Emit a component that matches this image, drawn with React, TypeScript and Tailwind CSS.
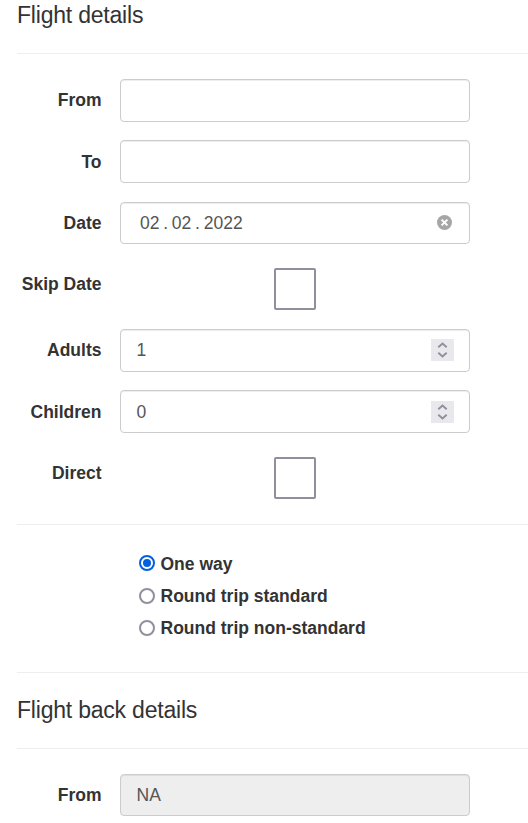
import React from "react";

const label = "w-[101.5px] shrink-0 text-right text-[17.5px] leading-[26px] font-bold";
const field =
  "ml-[18.5px] flex w-[350px] shrink-0 items-center rounded-[4px] border border-[#ccc] pl-[15.5px] text-[17.5px] text-[#555] shadow-[inset_0_1px_1px_rgba(0,0,0,0.075)]";
const box = "mt-[5px] ml-[172.5px] size-[42px] rounded-[2px] border-2 border-[#8f8f9d]";
const title = "text-[23px] leading-[30px] tracking-[-0.21px]";

function Spinner({ className }: { className: string }) {
  return (
    <span className={"mr-[15px] ml-auto flex h-[22px] w-[23px] items-center justify-center bg-[#e9e9ed] " + className}>
      <svg width="23" height="22" viewBox="0 0 23 22" fill="none" stroke="#8f8f9d" strokeWidth="1.9">
        <path d="M7.3 8.3l4.2-3.8 4.2 3.8M7.3 13.7l4.2 3.8 4.2-3.8" />
      </svg>
    </span>
  );
}

function Radio({ text, checked }: { text: string; checked?: boolean }) {
  return (
    <div className="flex h-8 items-center">
      <span
        className={
          checked
            ? "flex size-4 items-center justify-center rounded-full border-2 border-[#0060df]"
            : "size-4 rounded-full border-2 border-[#8f8f9d]"
        }
      >
        {checked && <span className="size-2 rounded-full bg-[#0060df]" />}
      </span>
      <span
        className={
          checked
            ? "ml-[5.5px] pt-px text-[17.5px] leading-[26px] font-bold"
            : "ml-[5.5px] pb-px text-[17.5px] leading-[26px] font-bold"
        }
      >
        {text}
      </span>
    </div>
  );
}

export default function App() {
  return (
    <div className="h-[823px] w-[528px] overflow-hidden bg-white pl-[17px] font-['Liberation_Sans',Arial,sans-serif] text-[#333]">
      <h2 className={title + " h-[53px]"}>Flight details</h2>
      <div className="-ml-[17px]">
        <div className="ml-[17px] border-t border-[#eee]" />
        <div className="mt-[25px] flex h-[61px]">
          <div className={label + " pt-2"}>From</div>
          <div className={field + " h-[43px]"} />
        </div>
        <div className="flex h-[62px]">
          <div className={label + " pt-[9px]"}>To</div>
          <div className={field + " h-[43px]"} />
        </div>
        <div className="flex h-[61px]">
          <div className={label + " pt-2"}>Date</div>
          <div className={field + " h-[42px]"}>
            <span className="ml-[3.5px] [word-spacing:-1.1px]">02 . 02 . 2022</span>
            <svg className="mt-[-1px] mr-[17px] ml-auto" width="15" height="15" viewBox="0 0 15 15">
              <circle cx="7.5" cy="7.5" r="7.5" fill="#a6a6a6" />
              <path d="M4.6 4.6l5.8 5.8M10.4 4.6l-5.8 5.8" stroke="#fff" strokeWidth="2" />
            </svg>
          </div>
        </div>
        <div className="flex h-[66px]">
          <div className={label + " pt-2"}>Skip Date</div>
          <div className={box} />
        </div>
        <div className="flex h-[61px]">
          <div className={label + " pt-2"}>Adults</div>
          <div className={field + " h-[43px]"}>1<Spinner className="mb-[2px]" /></div>
        </div>
        <div className="flex h-[62px]">
          <div className={label + " pt-[9px]"}>Children</div>
          <div className={field + " h-[43px]"}><span className="pt-px">0</span><Spinner className="mb-0" /></div>
        </div>
        <div className="flex h-[72px]">
          <div className={label + " pt-2"}>Direct</div>
          <div className={box} />
        </div>
        <div className="ml-[17px] border-t border-[#eee]" />
        <div className="h-[147px] pt-[22px] pl-[139px]">
          <Radio text="One way" checked />
          <div className="pt-px">
            <Radio text="Round trip standard" />
            <Radio text="Round trip non-standard" />
          </div>
        </div>
        <div className="ml-[17px] border-t border-[#eee]" />
      </div>
      <h2 className={title + " h-[75px] pt-[22px]"}>Flight back details</h2>
      <div className="border-t border-[#eee]" />
      <div className="mt-[25px] -ml-[17px] flex">
        <div className={label + " pt-2"}>From</div>
        <div className={field + " h-[42px] bg-[#eee]"}>NA</div>
      </div>
    </div>
  );
}
